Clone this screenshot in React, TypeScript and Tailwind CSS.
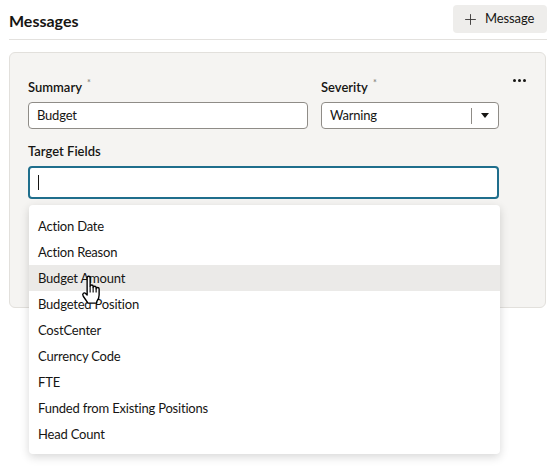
import React from 'react';
import { Plus } from 'lucide-react';

const fields = [
    'Action Date',
    'Action Reason',
    'Budget Amount',
    'Budgeted Position',
    'CostCenter',
    'Currency Code',
    'FTE',
    'Funded from Existing Positions',
    'Head Count',
];

const Required = () => (
    <span className="relative -top-[6px] ml-[5px] text-[9px] text-[#8a8783]">*</span>
);

// pointer cursor hovering the list
const HandCursor = () => (
    <svg width="25" height="30" viewBox="0 0 20 24" className="absolute left-[79px] top-[275px]">
        <path
            d="M6.5 12V2.2Q6.5 1 7.7 1Q8.9 1 8.9 2.2V9Q8.9 8 10.1 8Q11.3 8 11.3 9.2V10Q11.3 9 12.5 9Q13.7 9 13.7 10.2V11Q13.7 10 14.9 10Q16.1 10 16.1 11.2V16Q16.1 19 14.3 21L14 22.5H7.2L3.4 17Q2.5 15.5 3.5 14.6Q4.5 13.9 5.5 15L6.5 16Z"
            fill="#fff"
            stroke="#000"
            strokeWidth="1.1"
            strokeLinejoin="round"
        />
        <path d="M8.9 9V14M11.3 10V14M13.7 11V14" stroke="#000" strokeWidth="0.9" />
    </svg>
);

export default function App() {
    return (
        <div className="relative w-[554px] h-[470px] bg-white font-['Lato',sans-serif] text-[#161513] overflow-hidden">
            <div className="pl-[9px] pr-[7px]">
                {/* Header */}
                <div className="flex items-center justify-between pt-[5px] pb-[6px] border-b border-[#e3e1de]">
                    <h1 className="text-[16px] font-bold leading-none pt-[3px]">Messages</h1>
                    <button className="flex items-center gap-[6px] h-[28px] w-[94px] pl-[9px] rounded-[4px] bg-[#eeedeb] text-[13px] tracking-[-0.1px]">
                        <Plus className="w-[17px] h-[17px] text-[#3a3836]" strokeWidth={1.3} />
                        Message
                    </button>
                </div>

                {/* Message card */}
                <div className="mt-[12px] mr-[1px] h-[256px] rounded-[6px] border border-[#e2e0dc] bg-[#f5f4f2] flex pl-[18px] pt-[26px]">
                    <div className="w-[471px]">
                        <div className="flex gap-[13px]">
                            <div className="w-[280px]">
                                <div className="h-[16px] mb-[7px] text-[13px] font-semibold leading-[16px]">
                                    Summary<Required />
                                </div>
                                <div className="h-[27px] rounded-[4px] border border-[#8f8c87] bg-white flex items-center pl-[8px] text-[13px] tracking-[-0.2px]">
                                    Budget
                                </div>
                            </div>
                            <div className="w-[178px]">
                                <div className="h-[16px] mb-[7px] text-[13px] font-semibold leading-[16px]">
                                    Severity<Required />
                                </div>
                                <div className="h-[27px] rounded-[4px] border border-[#8f8c87] bg-white flex items-center text-[13px] tracking-[-0.2px]">
                                    <span className="flex-1 pl-[8px]">Warning</span>
                                    <span className="w-px h-[16px] bg-[#8f8c87]" />
                                    <span className="w-[26px] flex justify-center">
                                        <svg width="8" height="5" viewBox="0 0 8 5">
                                            <path d="M0 0H8L4 5Z" fill="#161513" />
                                        </svg>
                                    </span>
                                </div>
                            </div>
                        </div>
                        <div className="mt-[14px] h-[16px] mb-[7px] text-[13px] font-semibold leading-[16px]">
                            Target Fields
                        </div>
                        <div className="h-[33px] rounded-[4px] border-2 border-[#1f6e8c] bg-white flex items-center pl-[8px]">
                            <span className="w-px h-[15px] bg-[#161513]" />
                        </div>
                    </div>
                    <div className="ml-[14px] flex gap-[2px] h-[3px]">
                        <span className="w-[3px] h-[3px] rounded-full bg-[#161513]" />
                        <span className="w-[3px] h-[3px] rounded-full bg-[#161513]" />
                        <span className="w-[3px] h-[3px] rounded-full bg-[#161513]" />
                    </div>
                </div>
            </div>

            {/* Target field suggestions */}
            <ul className="absolute left-[29px] top-[205px] w-[471px] rounded-[4px] bg-white pt-[8px] pb-[7px] shadow-[0_3px_10px_rgba(0,0,0,0.16)] text-[13px] tracking-[-0.2px]">
                {fields.map((f) => (
                    <li
                        key={f}
                        className={`h-[26px] flex items-center pl-[9px] pt-px ${f === 'Budget Amount' ? 'bg-[#ebeae8]' : ''}`}
                    >
                        {f}
                    </li>
                ))}
            </ul>
            <HandCursor />
        </div>
    );
}
